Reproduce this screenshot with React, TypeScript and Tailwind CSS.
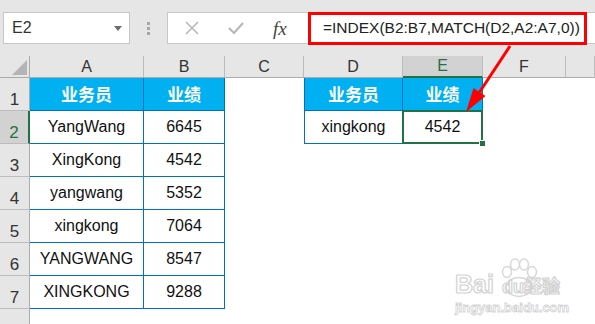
import React from 'react';

type Cell = { text?: string; head?: boolean; table?: boolean; left?: boolean };

const cols = ['A', 'B', 'C', 'D', 'E', 'F', ''];

const rows: Cell[][] = [
  [{ text: '业务员', head: true, table: true }, { text: '业绩', head: true, table: true }, {}, { text: '业务员', head: true, table: true, left: true }, { text: '业绩', head: true, table: true }, {}, {}],
  [{ text: 'YangWang', table: true }, { text: '6645', table: true }, {}, { text: 'xingkong', table: true, left: true }, { text: '4542', table: true }, {}, {}],
  [{ text: 'XingKong', table: true }, { text: '4542', table: true }, {}, {}, {}, {}, {}],
  [{ text: 'yangwang', table: true }, { text: '5352', table: true }, {}, {}, {}, {}, {}],
  [{ text: 'xingkong', table: true }, { text: '7064', table: true }, {}, {}, {}, {}, {}],
  [{ text: 'YANGWANG', table: true }, { text: '8547', table: true }, {}, {}, {}, {}, {}],
  [{ text: 'XINGKONG', table: true }, { text: '9288', table: true }, {}, {}, {}, {}, {}],
  [{}, {}, {}, {}, {}, {}, {}],
];

const FormulaBar: React.FC = () => (
  <div className="h-[56px] bg-[#e6e6e6] flex items-start pt-[12px]">
    {/* Name box */}
    <div className="ml-[3px] w-[127px] h-[32px] bg-white border border-[#c6c6c6] flex items-center justify-between pl-[8px] pr-[7px]">
      <span className="text-[16px] text-[#333]">E2</span>
      <div className="w-0 h-0 border-l-[4px] border-r-[4px] border-t-[5px] border-l-transparent border-r-transparent border-t-[#6b6b6b]" />
    </div>

    {/* Separator dots */}
    <div className="w-[37px] h-[32px] flex flex-col items-center justify-center gap-[2px]">
      <div className="w-[3px] h-[3px] bg-[#a6a6a6]" />
      <div className="w-[3px] h-[3px] bg-[#a6a6a6]" />
      <div className="w-[3px] h-[3px] bg-[#a6a6a6]" />
    </div>

    {/* Formula box */}
    <div className="flex-1 h-[32px] bg-white border-y border-l border-[#c6c6c6] flex items-center">
      <div className="w-[140px] flex items-center">
        <svg width="16" height="16" viewBox="0 0 16 16" className="ml-[16px]">
          <path d="M2 2 L14 14 M14 2 L2 14" stroke="#b8b8b8" strokeWidth="1.6" />
        </svg>
        <svg width="18" height="16" viewBox="0 0 18 16" className="ml-[27px]">
          <path d="M2 8 L7 13 L16 3" stroke="#b8b8b8" strokeWidth="2.2" fill="none" />
        </svg>
        <span className="ml-[28px] text-[19px] italic text-[#444] font-['Liberation_Serif',serif] leading-none">fx</span>
      </div>
      <div className="w-[279px] h-[33px] -my-[1px] border-[3px] border-[#ff0000] flex items-center pl-[12px]">
        <span className="text-[15.5px] text-[#222] whitespace-nowrap">=INDEX(B2:B7,MATCH(D2,A2:A7,0))</span>
      </div>
    </div>
  </div>
);

const App: React.FC = () => {
  return (
    <div className="relative w-[595px] h-[324px] overflow-hidden bg-white font-['Liberation_Sans',Arial,sans-serif]">
      <FormulaBar />

      <div className="grid grid-cols-[30px_114px_81px_79px_99px_80px_83px_1fr] grid-rows-[22px_repeat(8,33px)]">
        {/* Corner */}
        <div className="bg-[#e6e6e6] border-r border-b border-[#ababab] relative">
          <div className="absolute left-[12px] top-[4px] w-0 h-0 border-b-[15px] border-l-[15px] border-l-transparent border-b-[#b4b4b4]" />
        </div>

        {/* Column headers */}
        {cols.map((c) => (
          <div
            key={c || 'G'}
            className={
              c === 'E'
                ? 'bg-[#d2d2d2] border-r border-[#bcbcbc] border-b-2 border-b-[#217346] flex items-center justify-center text-[16px] text-[#217346]'
                : 'bg-[#e6e6e6] border-r border-[#bcbcbc] border-b border-b-[#ababab] flex items-center justify-center text-[16px] text-[#333]'
            }
          >
            {c}
          </div>
        ))}

        {rows.map((row, ri) => (
          <React.Fragment key={ri}>
            {/* Row header */}
            <div
              className={
                ri === 1
                  ? 'bg-[#d2d2d2] border-r-2 border-r-[#217346] border-b border-[#bcbcbc] flex items-end justify-center pb-[2px] text-[17px] text-[#217346] leading-none'
                  : 'bg-[#e6e6e6] border-r border-r-[#ababab] border-b border-[#bcbcbc] flex items-end justify-center pb-[2px] text-[17px] text-[#333] leading-none'
              }
            >
              {ri < 7 ? ri + 1 : ''}
            </div>

            {row.map((cell, ci) => {
              const selected = ri === 1 && ci === 4;
              let cls = 'flex items-center justify-center whitespace-nowrap';
              if (cell.table) cls += ' border-r border-b border-[#0070c0]';
              if (cell.left) cls += ' border-l border-l-[#0070c0]';
              if (cell.head) cls += ' bg-[#00b0f0] text-white font-bold text-[17px] font-["Noto_Sans_CJK_SC",sans-serif]';
              else cls += ' text-[16px] text-[#111]';
              if (selected) cls += ' relative z-10';
              return (
                <div key={ci} className={cls}>
                  {cell.text}
                  {selected && (
                    <>
                      <div className="absolute -left-[1px] -top-[1px] -right-[1px] -bottom-[1px] border-2 border-[#217346]" />
                      <div className="absolute -right-[4px] -bottom-[4px] w-[7px] h-[7px] bg-[#217346] border border-white" />
                    </>
                  )}
                </div>
              );
            })}
          </React.Fragment>
        ))}
      </div>

      {/* Red arrow */}
      <svg className="absolute inset-0 pointer-events-none z-20" width="595" height="324" viewBox="0 0 595 324">
        <line x1="510" y1="46" x2="479" y2="93" stroke="#ff0000" strokeWidth="3" />
        <polygon points="466,112 473.5,88 485.5,96" fill="#ff0000" />
      </svg>

      {/* Watermark */}
      <div className="absolute left-[455px] top-[258px] w-[120px] h-[58px] pointer-events-none select-none">
        <svg className="absolute left-[44px] top-0" width="40" height="40" viewBox="0 0 40 40">
          <ellipse cx="8" cy="14" rx="4.5" ry="5.5" fill="white" stroke="#d8d8d8" strokeWidth="1.5" />
          <ellipse cx="16" cy="6.5" rx="4.5" ry="5.5" fill="white" stroke="#d8d8d8" strokeWidth="1.5" />
          <ellipse cx="25" cy="6.5" rx="4.5" ry="5.5" fill="white" stroke="#d8d8d8" strokeWidth="1.5" />
          <ellipse cx="33" cy="14" rx="4.5" ry="5.5" fill="white" stroke="#d8d8d8" strokeWidth="1.5" />
          <ellipse cx="20" cy="29" rx="13" ry="9.5" fill="white" stroke="#d8d8d8" strokeWidth="1.5" />
        </svg>
        <div className="absolute left-0 top-[14px] flex items-baseline whitespace-nowrap font-bold text-transparent [-webkit-text-stroke:1.2px_#d2d2d2] leading-none">
          <span className="text-[25px]">Bai</span>
          <span className="ml-[8px] text-[18px]">du</span>
          <span className="text-[18px] font-['Noto_Sans_CJK_SC',sans-serif]">经验</span>
        </div>
        <div className="absolute left-0 top-[43px] text-[13px] font-bold text-transparent [-webkit-text-stroke:0.8px_#d2d2d2] leading-none whitespace-nowrap">
          jingyan.baidu.com
        </div>
      </div>
    </div>
  );
};

export default App;
